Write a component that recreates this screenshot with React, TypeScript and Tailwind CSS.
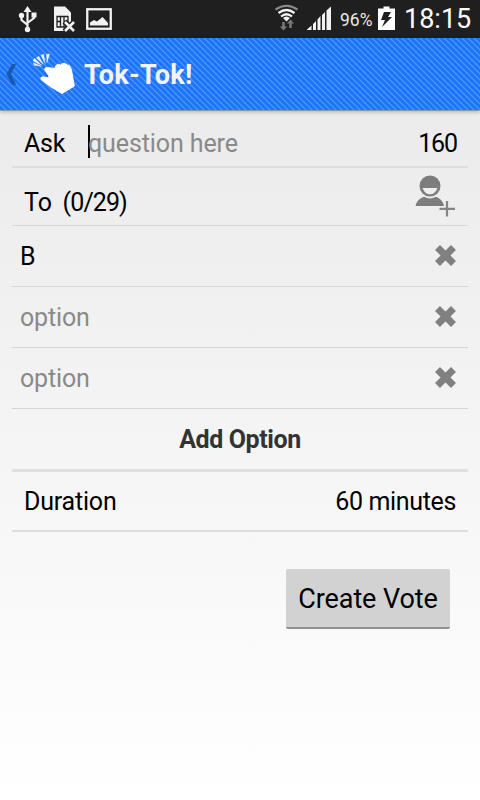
import type { ReactNode } from 'react';

function StatusBar() {
  return (
    <div className="flex h-[38px] items-center bg-[#1f1f1f] text-white">
      <svg width="120" height="38" viewBox="0 0 120 38" fill="#f2f2f2">
        <g stroke="#f2f2f2" strokeWidth="2.2" fill="none">
          <path d="M27.500 10V30M21.500 16V20L27.500 25M34 15V18L27.500 23" />
        </g>
        <path d="M27.500 6L31.500 12H23.500Z" />
        <circle cx="27.500" cy="29.500" r="2.700" />
        <circle cx="21.500" cy="15.500" r="2.700" />
        <rect x="31.500" y="12.500" width="5" height="5" />
        <path d="M54 6.500H65L71 12.500V31H54Z" />
        <path d="M57 16.500H68V27H57ZM60.500 16.500V27M64 16.500V27M57 21.500H60.500M64 21.500H68" fill="none" stroke="#1f1f1f" strokeWidth="1.300" />
        <path d="M64.500 21.500L74.500 31.500M74.500 21.500L64.500 31.500" stroke="#1f1f1f" strokeWidth="5.500" />
        <path d="M65 22L74 31M74 22L65 31" stroke="#f2f2f2" strokeWidth="2.600" />
        <rect x="87.250" y="9.250" width="23.500" height="19.500" fill="none" stroke="#f2f2f2" strokeWidth="2.300" />
        <path d="M90 25.500V22.500L94 20L97 21.500L102.500 17L108 23V25.500Z" />
      </svg>
      <div className="flex-1" />
      <svg width="62" height="38" viewBox="272 0 62 38">
        <g fill="none" strokeWidth="2.2">
          <path d="M275.500 9.500Q286.500 2 297.500 9.500" stroke="#8a8a8a" />
          <path d="M278.500 13Q286.500 7 294.500 13M281 16.500Q286.500 12 292 16.500" stroke="#f2f2f2" />
        </g>
        <path d="M283 18Q286.500 15 290 18L286.500 21.500Z" fill="#f2f2f2" />
        <path d="M282.200 22H284.800V26.500H287.200L283.500 30.500L279.800 26.500H282.200ZM289.200 28V23.500H286.800L290.500 19.500L294.200 23.500H291.800V28Z" fill="#777" />
        <path d="M306.500 30L311.500 25.500V30ZM313 30V24L316 21V30ZM317.500 30V19.500L320.500 16V30ZM322 30V15L325 12V30ZM326.500 30V10.500L331 6.500V30Z" fill="#f2f2f2" />
      </svg>
      <span className="ml-1.5 w-[36px] text-[18px] whitespace-nowrap text-[#e8e8e8]">
        <span className="inline-block origin-left scale-x-[0.97]">96%</span>
      </span>
      <svg className="ml-0.5" width="18" height="38" viewBox="378 0 18 38">
        <path d="M378 8.500H383.500V6.500H389.500V8.500H395V30H378Z" fill="#fff" />
        <path d="M384 12H391L388 17H392L382 27L385 20H381Z" fill="#1f1f1f" />
      </svg>
      <span className="ml-2 w-[76px] text-[27px] leading-[38px] whitespace-nowrap">18:15</span>
    </div>
  );
}

function KnockingHand() {
  return (
    <svg width="44" height="44" viewBox="32 52 44 44">
      <path d="M44.500 69.500Q45 67 47.500 67.500L54.500 68.500L56.500 65Q58.500 63.500 60.500 65L62.500 63.500Q65 62.500 67 65L69.500 65.500L71.500 70L72.500 76L74.300 86L62 93.500L51 87L41 79.500Q40 77 43 76.800L48.500 78L49 76Z" fill="#fff" stroke="#fff" strokeLinejoin="round" />
      <path d="M41 66.300L34.200 65.200L33.500 62.800ZM41.800 65.500L33 60.800L34.500 58.200ZM43.200 64.300L36.500 58L38.800 56.200ZM45 63.300L41 55.200L43.700 54.300ZM47 62.800L46.500 54.300L49.500 54Z" fill="#eef4ff" stroke="#eef4ff" strokeWidth="0.4" />
    </svg>
  );
}

function ActionBar() {
  return (
    <header className="relative z-10 h-[73px] border-b border-[#8d98a8] shadow-[0_1px_4px_rgba(0,0,0,0.25)]">
      <svg className="absolute inset-0" width="480" height="72">
        <defs>
          <pattern id="stripes" width="6" height="6" patternUnits="userSpaceOnUse">
            <rect width="6" height="6" fill="#1c74fb" />
            <path d="M-1 -1L7 7M-1 5L1 7M5 -1L7 1" stroke="#4d93fb" strokeWidth="1.300" />
          </pattern>
        </defs>
        <rect width="480" height="72" fill="url(#stripes)" />
      </svg>
      <div className="relative flex h-[72px] items-center pt-0.5">
        <svg className="ml-1.5" width="12" height="24" viewBox="0 0 12 24">
          <path d="M6 1H10L5 11L10 22H6L0.500 11Z" fill="#1b57ad" />
        </svg>
        <div className="-mt-0.5 ml-3.5">
          <KnockingHand />
        </div>
        <h1 className="ml-2 text-[27px] font-bold tracking-[0.3px] text-[#f3f3f3]">Tok-Tok!</h1>
      </div>
    </header>
  );
}

function AddPerson() {
  return (
    <svg className="-mt-0.5" width="42" height="42" viewBox="415 176 42 42">
      <circle cx="430" cy="187" r="10.500" fill="#7d7d7d" />
      <path d="M422.500 189H437.500Q435 195.300 430 195.300Q425 195.300 422.500 189Z" fill="#eee" />
      <path d="M415.500 207Q417 200 424 197.800Q430 201.200 436 197.800Q442.500 200 444 207Z" fill="#7d7d7d" />
      <path d="M447 202V217.500M439.500 209.800H455" stroke="#858585" strokeWidth="2.200" />
    </svg>
  );
}

function Option({ children, empty }: { children: ReactNode; empty?: boolean }) {
  return (
    <div className="flex h-[61px] items-center justify-between border-b border-[#d6d6d6] pr-[11px] pl-2">
      <span className={empty ? 'pt-0.5 tracking-[-0.15px] text-[#898989]' : 'pt-0.5 text-black'}>{children}</span>
      <svg className="-mt-0.5" width="23" height="23" viewBox="0 0 23 23">
        <path d="M3.500 3.500L19.500 19.500M19.500 3.500L3.500 19.500" stroke="#808080" strokeWidth="7" />
      </svg>
    </div>
  );
}

export default function App() {
  return (
    <div className="h-[800px] w-[480px] overflow-hidden bg-linear-to-b from-[#e8e8e8] to-white font-[Roboto,sans-serif] text-black">
      <StatusBar />
      <ActionBar />
      <main className="px-3 text-[25px] leading-[30px]">
        <div className="flex h-[57px] items-center border-b-2 border-[#dedede] px-3 pt-2">
          <span className="w-[64px] pt-0.5 tracking-[-0.2px]">Ask</span>
          <span className="-mt-0.5 h-[33px] w-0.5 bg-black" />
          <span className="-ml-0.5 flex-1 pt-0.5 tracking-[-0.1px] text-[#898989]">question here</span>
          <span className="-mr-px pt-0.5 tracking-[-1.1px]">160</span>
        </div>
        <div className="flex h-[58px] items-center justify-between border-b border-[#d6d6d6] pr-[11px] pl-3">
          <span className="pt-3 whitespace-pre">To<span className="tracking-[-0.9px]">{'  (0/29)'}</span></span>
          <AddPerson />
        </div>
        <Option>B</Option>
        <Option empty>option</Option>
        <Option empty>option</Option>
        <div className="flex h-[63px] items-center justify-center border-b-[3px] border-[#dedede] pt-0.5 font-bold tracking-[-0.4px] text-[#333]">Add Option</div>
        <div className="flex h-[60px] items-center justify-between border-b-2 border-[#dedede] px-3 pt-0.5">
          <span className="tracking-[-0.2px]">Duration</span>
          <span className="tracking-[-0.35px]">60 minutes</span>
        </div>
        <button className="mt-[37px] ml-[274px] block h-[60px] w-[164px] rounded-[2px] border-b-2 border-[#8f8f8f] bg-[#d2d2d2] pt-0.5 text-[27px] tracking-[-0.1px] whitespace-nowrap">Create Vote</button>
      </main>
    </div>
  );
}
